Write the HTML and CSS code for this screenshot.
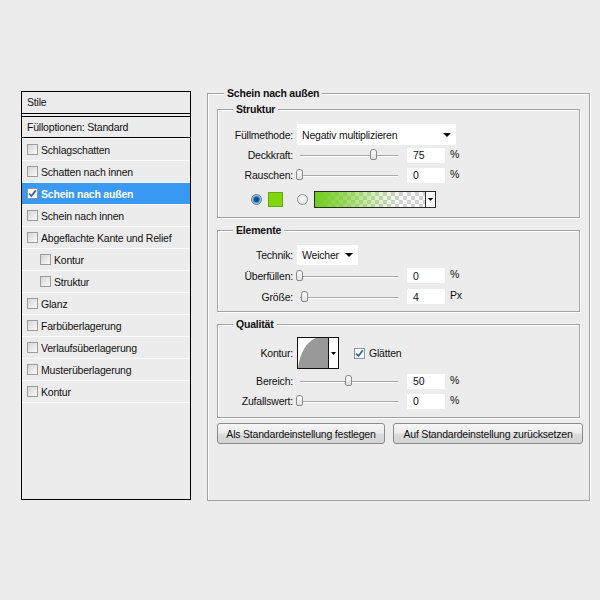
FILE: index.html
```html
<!DOCTYPE html>
<html lang="de">
<head>
    <meta charset="UTF-8">
    <title>Ebenenstil - Schein nach außen</title>
    <link rel="stylesheet" href="styles.css">
</head>
<body>
    <div class="dialog">
        <!-- Style list on the left -->
        <div class="styles-panel">
            <div class="panel-head">Stile</div>
            <div class="panel-fill">Fülloptionen: Standard</div>
            <ul class="style-list">
                <li><span class="check"></span>Schlagschatten</li>
                <li><span class="check"></span>Schatten nach innen</li>
                <li class="active"><span class="check on"><svg width="9" height="9" viewBox="0 0 9 9"><path d="M1.2 4.6 3.4 7 7.8 1.4" fill="none" stroke="#2b62b8" stroke-width="1.7"/></svg></span>Schein nach außen</li>
                <li><span class="check"></span>Schein nach innen</li>
                <li><span class="check"></span>Abgeflachte Kante und Relief</li>
                <li class="sub"><span class="check"></span>Kontur</li>
                <li class="sub"><span class="check"></span>Struktur</li>
                <li><span class="check"></span>Glanz</li>
                <li><span class="check"></span>Farbüberlagerung</li>
                <li><span class="check"></span>Verlaufsüberlagerung</li>
                <li><span class="check"></span>Musterüberlagerung</li>
                <li><span class="check"></span>Kontur</li>
            </ul>
        </div>

        <!-- Settings for the selected style -->
        <div class="group outer">
            <div class="group-title">Schein nach außen</div>

            <div class="group struct">
                <div class="group-title">Struktur</div>
                <div class="row row-select">
                    <span class="lbl">Füllmethode:</span>
                    <div class="select select-wide">Negativ multiplizieren<svg width="8" height="4" viewBox="0 0 8 4"><path d="M0 0h8L4 4z"/></svg></div>
                </div>
                <div class="row">
                    <span class="lbl">Deckkraft:</span>
                    <div class="slider"><span class="thumb" style="left: 75%"></span></div>
                    <input class="num" type="text" value="75">
                    <span class="unit">%</span>
                </div>
                <div class="row">
                    <span class="lbl">Rauschen:</span>
                    <div class="slider"><span class="thumb" style="left: 0%"></span></div>
                    <input class="num" type="text" value="0">
                    <span class="unit">%</span>
                </div>
                <div class="row color-row">
                    <span class="radio on"></span>
                    <span class="swatch"></span>
                    <span class="radio"></span>
                    <div class="gradient">
                        <div class="gradient-fill"></div>
                        <div class="gradient-arrow"><svg width="5" height="3" viewBox="0 0 5 3"><path d="M0 0h5L2.5 3z"/></svg></div>
                    </div>
                </div>
            </div>

            <div class="group elements">
                <div class="group-title">Elemente</div>
                <div class="row row-tall first">
                    <span class="lbl">Technik:</span>
                    <div class="select select-short">Weicher<svg width="8" height="4" viewBox="0 0 8 4"><path d="M0 0h8L4 4z"/></svg></div>
                </div>
                <div class="row row-tall">
                    <span class="lbl">Überfüllen:</span>
                    <div class="slider"><span class="thumb" style="left: 0%"></span></div>
                    <input class="num" type="text" value="0">
                    <span class="unit">%</span>
                </div>
                <div class="row row-tall">
                    <span class="lbl">Größe:</span>
                    <div class="slider"><span class="thumb" style="left: 5%"></span></div>
                    <input class="num" type="text" value="4">
                    <span class="unit">Px</span>
                </div>
            </div>

            <div class="group quality">
                <div class="group-title">Qualität</div>
                <div class="row contour-row">
                    <span class="lbl">Kontur:</span>
                    <div class="contour">
                        <svg width="30" height="30" viewBox="0 0 30 30"><path d="M0 30C2 15 8 4 18 0H30V30Z" fill="#999"/></svg>
                        <div class="contour-arrow"><svg width="5" height="3" viewBox="0 0 5 3"><path d="M0 0h5L2.5 3z"/></svg></div>
                    </div>
                    <label class="smooth"><span class="check on"><svg width="9" height="9" viewBox="0 0 9 9"><path d="M1.2 4.6 3.4 7 7.8 1.4" fill="none" stroke="#2b62b8" stroke-width="1.7"/></svg></span>Glätten</label>
                </div>
                <div class="row range-row">
                    <span class="lbl">Bereich:</span>
                    <div class="slider"><span class="thumb" style="left: 50%"></span></div>
                    <input class="num" type="text" value="50">
                    <span class="unit">%</span>
                </div>
                <div class="row">
                    <span class="lbl">Zufallswert:</span>
                    <div class="slider"><span class="thumb" style="left: 0%"></span></div>
                    <input class="num" type="text" value="0">
                    <span class="unit">%</span>
                </div>
            </div>

            <div class="buttons">
                <button type="button" class="btn btn-save">Als Standardeinstellung festlegen</button>
                <button type="button" class="btn btn-reset">Auf Standardeinstellung zurücksetzen</button>
            </div>
        </div>
    </div>
</body>
</html>
```

FILE: styles.css
```css
body { margin: 0; background: #ececec; font-family: "Liberation Sans", Arial, sans-serif; font-size: 10.5px; letter-spacing: -0.2px; color: #111; }
.dialog { display: flex; align-items: flex-start; gap: 16px; padding: 91px 0 0 21px; }

/* style list */
.styles-panel { width: 170px; height: 409px; box-sizing: border-box; border: 1px solid #000; }
.panel-head { height: 21px; line-height: 21px; padding-left: 5px; border-bottom: 1px solid #000; }
.panel-fill { height: 20px; line-height: 20px; padding-left: 5px; margin-top: 2px; border-top: 1px solid #000; border-bottom: 1px solid #000; }
.style-list { list-style: none; margin: 0; padding: 0; }
.style-list li { display: flex; align-items: center; height: 21px; padding-left: 5px; border-top: 1px solid #fafafa; }
.style-list li:last-child { border-bottom: 1px solid #fafafa; }
.style-list li.sub { padding-left: 18px; }
.style-list li.active { background: #3a9af2; color: #fff; font-weight: bold; }

.check { display: flex; align-items: center; justify-content: center; flex: none; width: 11px; height: 11px; box-sizing: border-box; margin-right: 3px; border: 1px solid #9c9c9c; background: linear-gradient(135deg, #d4d4d4, #fbfbfb); }
.check.on { background: #fff; border-color: #8c97a3; }

/* group boxes */
.group { border: 1px solid #a3a3a3; box-shadow: inset 1px 1px 0 #fff, 1px 1px 0 #fff; }
.group-title { width: fit-content; height: 13px; line-height: 13px; margin: -7px 0 0 15px; padding: 0 3px; background: #ececec; font-weight: bold; }
.outer { width: 383px; height: 408px; box-sizing: border-box; margin-top: 2px; }
.outer > .group-title { margin-left: 16px; }
.outer > .group { margin: 12px 9px 0; }
.outer > .struct { margin-top: 9px; padding-bottom: 9px; }
.elements { padding-bottom: 4px; }
.quality { padding-bottom: 6px; }

/* rows */
.row { display: flex; align-items: center; height: 20px; }
.row-select { height: 21px; margin-top: 8px; }
.row-tall { height: 21px; }
.row-tall.first { margin-top: 7px; }
.lbl { flex: none; width: 75px; margin-right: 4px; text-align: right; }

.select { display: flex; align-items: center; justify-content: space-between; height: 21px; box-sizing: border-box; padding: 0 5px; background: #fff; }
.select-wide { width: 159px; }
.select-short { width: 61px; height: 20px; }

.slider { position: relative; flex: none; width: 98px; height: 14px; margin: 0 9px 0 3px; }
.slider::before { content: ""; position: absolute; left: 0; right: 0; top: 7px; height: 1px; background: #a8a8a8; box-shadow: 0 1px 0 #fff; }
.thumb { position: absolute; top: 1px; width: 7px; height: 11px; margin-left: -4px; box-sizing: border-box; border: 1px solid #8a8a8a; border-radius: 3px 3px 2px 2px; background: linear-gradient(#fff, #e0e0e0); }

.num { width: 38px; height: 15px; box-sizing: border-box; padding: 0 0 0 6px; border: none; background: #fff; font: inherit; letter-spacing: inherit; color: #111; }
.unit { margin: 0 0 3px 5px; }

/* colour / gradient choice */
.color-row { height: 18px; margin-top: 5px; padding-left: 33px; }
.radio { flex: none; width: 11px; height: 11px; box-sizing: border-box; border-radius: 50%; border: 1px solid #8d949b; background: radial-gradient(circle at 50% 40%, #fff, #d6d6d6); }
.radio.on { border-color: #6c7f92; background: radial-gradient(circle at 50% 50%, #0f4f86 0 2px, #3d8ccc 3px, #cfe3f2 5px); }
.swatch { width: 15px; height: 15px; box-sizing: border-box; margin: 0 14px 0 6px; border: 1px solid #6aa812; background: #80d80c; }
.gradient { display: flex; width: 122px; height: 17px; box-sizing: border-box; margin-left: 6px; border: 1px solid #2a2a2a; }
.gradient-fill { flex: 1; background: linear-gradient(to right, #6fcd1c 0%, rgba(118, 208, 36, 0.75) 25%, rgba(130, 214, 50, 0.3) 55%, rgba(130, 214, 50, 0) 80%), repeating-conic-gradient(#d2d2d2 0 25%, #fff 0 50%) 0 0 / 8px 8px; }
.gradient-arrow { display: flex; align-items: center; justify-content: center; width: 9px; border-left: 1px solid #2a2a2a; background: #fff; }

/* contour */
.contour-row { height: 32px; margin-top: 6px; }
.contour { display: flex; width: 42px; height: 32px; box-sizing: border-box; border: 1px solid #111; background: #fff; }
.contour svg { display: block; }
.contour-arrow { display: flex; align-items: center; justify-content: center; flex: 1; border-left: 1px solid #111; }
.smooth { display: flex; align-items: center; margin-left: 15px; }
.smooth .check { margin-right: 4px; }
.range-row { margin-top: 2px; }

/* buttons */
.buttons { display: flex; gap: 8px; margin: 5px 0 0 9px; }
.btn { height: 21px; padding: 0; box-sizing: border-box; border: 1px solid #8b8b8b; border-radius: 3px; background: linear-gradient(#f7f7f7, #ebebeb 48%, #dcdcdc 52%, #d3d3d3); font: inherit; letter-spacing: inherit; color: #111; }
.btn-save { width: 168px; }
.btn-reset { width: 190px; }
```
